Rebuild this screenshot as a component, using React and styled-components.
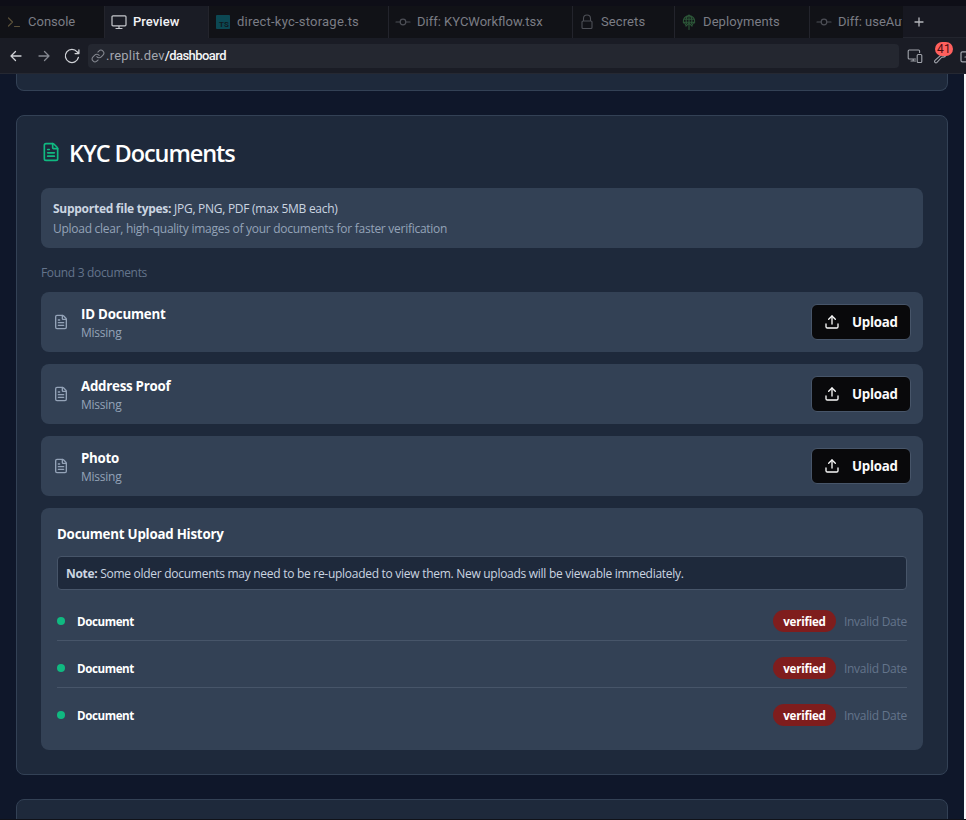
import React from "react";
import styled, { createGlobalStyle, css } from "styled-components";
import { FileText, Upload } from "lucide-react";

const GlobalStyle = createGlobalStyle`
  *, *::before, *::after { box-sizing: border-box; }
  html, body { margin: 0; padding: 0; overflow: hidden; background: #0e101a; }
`;

const uiFont = `Roboto, "Noto Sans", sans-serif`;
const pageFont = `"Open Sans", "Noto Sans", sans-serif`;

const Window = styled.div`
  display: flex;
  flex-direction: column;
  width: 966px;
  height: 820px;
  overflow: hidden;
  background: #0e0e17;
  padding-top: 6px;
`;

/* Tab strip */
const TabStrip = styled.div`
  display: flex;
  flex: none;
  height: 32px;
  background: #111217;
`;

const Tab = styled.div`
  display: flex;
  align-items: center;
  flex: none;
  width: ${(p) => p.$width}px;
  padding-left: ${(p) => p.$inset || 6}px;
  gap: ${(p) => p.$gap || 6}px;
  border-right: 1px solid ${(p) => (p.$last ? "transparent" : "#23242c")};
  background: ${(p) => (p.$active ? "#1a1c25" : "#111217")};
  color: ${(p) => (p.$active ? "#f2f3f5" : "#7b7d85")};
  overflow: hidden;
  svg { flex: none; }
`;

const TabLabel = styled.span`
  font: ${(p) => (p.$active ? 500 : 400)} 13px/20px ${uiFont};
  letter-spacing: ${(p) => p.$track || 0}px;
  white-space: nowrap;
  margin-top: -1px;
`;

const NewTab = styled.div`
  display: flex;
  flex: 1;
  align-items: center;
  padding: 1px 0 0 11px;
  background: #171821;
  border-bottom: 1px solid #23252e;
`;

/* Address bar */
const Toolbar = styled.div`
  display: flex;
  flex: none;
  align-items: center;
  height: 36px;
  padding-left: 8px;
  background: #1a1c25;
  border-bottom: 1px solid #252832;
`;

const NavIcons = styled.div`
  display: flex;
  align-items: center;
  gap: 12px;
  width: 80px;
  svg { flex: none; }
`;

const Address = styled.div`
  display: flex;
  align-items: center;
  width: 811px;
  height: 24px;
  padding-left: 3px;
  border-radius: 4px;
  background: #242730;
  font: 400 13px/20px ${uiFont};
`;

const Host = styled.span`
  margin-left: 1px;
  letter-spacing: 0.22px;
  color: #a3a6ae;
`;

const Path = styled.span`
  letter-spacing: -0.57px;
  font-weight: 500;
  color: #f4f5f6;
`;

const Tools = styled.div`
  display: flex;
  align-items: center;
  flex: 1;
  min-width: 0;
  padding-left: 8px;
  gap: 10px;
  overflow: visible;
  svg { flex: none; }
`;

const DevTools = styled.div`
  position: relative;
  display: flex;
`;

const Badge = styled.span`
  position: absolute;
  left: 2px;
  top: -6px;
  width: 18px;
  height: 14px;
  border-radius: 7px;
  background: #ff605e;
  color: #4c0b10;
  text-align: center;
  font: 400 12px/14px ${uiFont};
  letter-spacing: 0.2px;
`;

/* Previewed page */
const Viewport = styled.div`
  display: flex;
  flex: 1;
  min-height: 0;
  background: #0f172a;
  border-bottom: 1px solid #101219;
  font-family: ${pageFont};
`;

const Page = styled.main`
  width: 964px;
  padding: 0 16px;
  overflow: hidden;
`;

const ScrollEdge = styled.div`
  width: 2px;
  background: #f8f9fa;
`;

const Card = styled.section`
  height: ${(p) => p.$height}px;
  padding: 24px;
  margin-bottom: 24px;
  background: #1e293b;
  border: 1px solid #334155;
  border-radius: 8px;
  ${(p) => p.$cutTop && css`padding: 0; border-top: 0; border-radius: 0 0 8px 8px;`}
`;

const Title = styled.h2`
  display: flex;
  align-items: center;
  gap: 8px;
  height: 32px;
  margin: -4px 0 20px;
  color: #fff;
  font-size: 23.5px;
  font-weight: 600;
  letter-spacing: -1.08px;
  line-height: 32px;
  white-space: nowrap;
  span { padding-top: 2px; }
  svg { color: #10b981; }
`;

const Panel = styled.div`
  background: #334155;
  border-radius: 8px;
`;

const InfoPanel = styled(Panel)`
  height: 60px;
  padding: 11px 12px;
  font-size: 12px;
  line-height: 20px;
  color: #cbd5e1;
`;

const Text = styled.div`
  letter-spacing: ${(p) => p.$track}px;
  white-space: nowrap;
  color: ${(p) => p.$color || "inherit"};
`;

const Strong = styled.strong`
  font-weight: 700;
  letter-spacing: ${(p) => p.$track}px;
`;

const Found = styled(Text)`
  height: 20px;
  margin: 15px 0 9px;
  font-size: 12px;
  line-height: 20px;
`;

const DocRow = styled(Panel)`
  display: flex;
  align-items: center;
  height: 60px;
  margin-bottom: 12px;
  padding: 0 12px;
`;

const DocInfo = styled.div`
  flex: 1;
  margin-left: 12px;
`;

const DocName = styled(Text)`
  font-size: 13.3px;
  font-weight: 700;
  line-height: 20px;
  color: #fff;
`;

const DocStatus = styled(Text)`
  font-size: 12px;
  line-height: 16px;
  margin-top: 1px;
  color: #94a3b8;
`;

const UploadButton = styled.button`
  display: flex;
  align-items: center;
  gap: 12px;
  width: 100px;
  height: 36px;
  padding: 0 12px;
  border: 1px solid #475569;
  border-radius: 6px;
  background: #09090b;
  color: #fafafa;
  font: 700 13.3px/20px ${pageFont};
  letter-spacing: -0.25px;
`;

const History = styled(Panel)`
  height: 242px;
  padding: 16px;
`;

const HistoryTitle = styled.h3`
  margin: 0 0 12px;
  color: #fff;
  font-size: 13.3px;
  font-weight: 700;
  line-height: 20px;
  letter-spacing: -0.22px;
`;

const Note = styled.div`
  height: 34px;
  padding: 0 8px;
  border: 1px solid #475569;
  border-radius: 4px;
  background: #1e293b;
  color: #cbd5e1;
  font-size: 12px;
  line-height: 33px;
  letter-spacing: -0.28px;
  white-space: nowrap;
`;

const Entries = styled.div`
  margin-top: 12px;
`;

const Entry = styled.div`
  display: flex;
  align-items: center;
  height: ${(p) => (p.$last ? 46 : 47)}px;
  margin-top: ${(p) => (p.$first ? -8 : 0)}px;
  padding-top: 8px;
  border-bottom: ${(p) => (p.$last ? 0 : 1)}px solid #475569;
  font-size: 12px;
  line-height: 16px;
`;

const Dot = styled.span`
  width: 8px;
  height: 8px;
  margin: 0 12px 0 0;
  border-radius: 50%;
  background: #10b981;
`;

const EntryName = styled(Text)`
  flex: 1;
  padding-top: 2px;
  font-size: 11.6px;
  font-weight: 700;
  color: #fff;
`;

const EntryDate = styled(Text)`
  padding-top: 2px;
`;

const Pill = styled.span`
  width: 63px;
  height: 22px;
  margin-right: 8px;
  border-radius: 11px;
  background: #7f1d1d;
  color: #fff;
  font-size: 11.6px;
  font-weight: 700;
  letter-spacing: -0.25px;
  line-height: 24px;
  text-align: center;
`;

const Icon = ({ size = 16, width, height, box = "0 0 16 16", color = "currentColor", stroke = 1, children }) => (
  <svg width={width || size} height={height || size} viewBox={box} fill="none" stroke={color} strokeWidth={stroke} strokeLinecap="round" strokeLinejoin="round">
    {children}
  </svg>
);

const ConsoleIcon = () => (
  <Icon color="#5b513a" stroke={1.2} width={14} height={16} box="0 0 14 16">
    <path d="M1.5 4l4 4-4 4M7.5 12.5h5" />
  </Icon>
);
const MonitorIcon = () => (
  <Icon color="#c6c8cd" stroke={1.2}>
    <path d="M2 1.8h12q1 0 1 1v8q0 1-1 1H2q-1 0-1-1v-8q0-1 1-1zM8 12v2.5M5 14.5h6" />
  </Icon>
);
const TsIcon = () => (
  <svg width="14" height="14" viewBox="0 0 14 14">
    <rect width="14" height="14" rx="0.8" fill="#0c4853" />
    <text x="3" y="12.4" fill="#11191e" fontFamily="Roboto, sans-serif" fontWeight="700" fontSize="8">TS</text>
  </svg>
);
const DiffIcon = () => (
  <Icon color="#4d4f56" stroke={1.2}>
    <path d="M1 8h4.2M10.8 8H15" /><circle cx="8" cy="8" r="2.8" />
  </Icon>
);
const LockIcon = () => (
  <Icon color="#4d4f56" stroke={1.1}>
    <path d="M4 7h8q1 0 1 1v5.5q0 1-1 1H4q-1 0-1-1V8q0-1 1-1zM4.5 7V4.5a3.5 3.5 0 0 1 7 0V7" />
  </Icon>
);
const DeployIcon = () => (
  <Icon color="#2c5638" stroke={1.1}>
    <path d="M2.7 9a5.6 5.6 0 1 1 10.6 0M2.6 5.2h10.8M2.3 8.2h11.4M5.6 9.6C4.7 6 5.6 2.4 8 1.1c2.4 1.3 3.3 4.9 2.4 8.5M8 1v14.5M5 12.2l3-3 3 3M3.4 8.6l1.6 3M12.6 8.6l-1.6 3" />
  </Icon>
);
const PlusIcon = () => (
  <Icon size={10} box="0 0 10 10" color="#b5b6bc" stroke={1.3}><path d="M5 1v8M1 5h8" /></Icon>
);
const BackIcon = () => (
  <Icon color="#cfd1d6" stroke={1.3}><path d="M13 8H3M7.5 3.5L3 8l4.5 4.5" /></Icon>
);
const ForwardIcon = () => (
  <Icon color="#858891" stroke={1.3}><path d="M3 8h10M8.5 3.5L13 8l-4.5 4.5" /></Icon>
);
const ReloadIcon = () => (
  <Icon color="#cfd1d6" stroke={1.3}>
    <path d="M14.4 9.4a6.6 6.6 0 1 1-1.3-5.6l1.5 1.7M14.9 1.8v3.8h-3.8" />
  </Icon>
);
const LinkIcon = () => (
  <Icon size={14} box="0 0 24 24" color="#858891" stroke={1.8}>
    <path d="M10 13a5 5 0 0 0 7.54.54l3-3a5 5 0 0 0-7.07-7.07l-1.72 1.71" />
    <path d="M14 11a5 5 0 0 0-7.54-.54l-3 3a5 5 0 0 0 7.07 7.07l1.71-1.71" />
  </Icon>
);
const DevicesIcon = () => (
  <Icon color="#a1a4ac" stroke={1.1}>
    <path d="M8.5 11H2.2q-1 0-1-1V3q0-1 1-1h9.4q1 0 1 1v1.5M6.2 11v2M4 13h4.5" />
    <rect x="10.2" y="6.5" width="4.6" height="8" rx="1" />
  </Icon>
);
const WrenchIcon = () => (
  <Icon color="#a1a4ac" stroke={1.1}>
    <path d="M7.6 7.4L2 12.4q-1 1 0 2t2 0l5-5.4q3 .8 4-2" />
  </Icon>
);
const OpenIcon = () => (
  <Icon color="#a1a4ac" stroke={1.2}>
    <path d="M9 3.8H3.4q-1.4 0-1.4 1.3v7.4q0 1.4 1.4 1.4H9M6 9h3" />
  </Icon>
);

const tabs = [
  { label: "Console", icon: <ConsoleIcon />, width: 105, gap: 7, inset: 7 },
  { label: "Preview", icon: <MonitorIcon />, width: 104, active: true, track: 0.05 },
  { label: "direct-kyc-storage.ts", icon: <TsIcon />, width: 180, gap: 7, inset: 7, track: 0.22 },
  { label: "Diff: KYCWorkflow.tsx", icon: <DiffIcon />, width: 184, track: 0 },
  { label: "Secrets", icon: <LockIcon />, width: 102, track: 0.1 },
  { label: "Deployments", icon: <DeployIcon />, width: 135, track: 0.1 },
  { label: "Diff: useAuth.ts", icon: <DiffIcon />, width: 93, track: 0, last: true },
];

const documents = [
  { name: "ID Document", track: -0.2 },
  { name: "Address Proof", track: -0.25 },
  { name: "Photo", track: -0.3 },
];

export default function App() {
  return (
    <Window>
      <GlobalStyle />
      <TabStrip>
        {tabs.map((t) => (
          <Tab key={t.label} $width={t.width} $gap={t.gap} $inset={t.inset} $active={t.active} $last={t.last}>
            {t.icon}
            <TabLabel $active={t.active} $track={t.track}>{t.label}</TabLabel>
          </Tab>
        ))}
        <NewTab><PlusIcon /></NewTab>
      </TabStrip>
      <Toolbar>
        <NavIcons><BackIcon /><ForwardIcon /><ReloadIcon /></NavIcons>
        <Address>
          <LinkIcon />
          <Host>.replit.dev</Host>
          <Path>/dashboard</Path>
        </Address>
        <Tools>
          <DevicesIcon />
          <DevTools><WrenchIcon /><Badge>41</Badge></DevTools>
          <OpenIcon />
        </Tools>
      </Toolbar>
      <Viewport>
        <Page>
          <Card $height={17} $cutTop />
          <Card $height={660}>
            <Title><FileText size={20} /><span>KYC Documents</span></Title>
            <InfoPanel>
              <Text $track={-0.27}><Strong $track={-0.27}>Supported file types:</Strong> JPG, PNG, PDF (max 5MB each)</Text>
              <Text $track={-0.27} $color="#94a3b8">Upload clear, high-quality images of your documents for faster verification</Text>
            </InfoPanel>
            <Found $track={-0.32} $color="#64748b">Found 3 documents</Found>
            {documents.map((d) => (
              <DocRow key={d.name}>
                <FileText size={16} color="#94a3b8" />
                <DocInfo>
                  <DocName $track={d.track}>{d.name}</DocName>
                  <DocStatus $track={-0.24}>Missing</DocStatus>
                </DocInfo>
                <UploadButton><Upload size={16} />Upload</UploadButton>
              </DocRow>
            ))}
            <History>
              <HistoryTitle>Document Upload History</HistoryTitle>
              <Note><Strong $track={-0.3}>Note:</Strong> Some older documents may need to be re-uploaded to view them. New uploads will be viewable immediately.</Note>
              <Entries>
                {[0, 1, 2].map((i) => (
                  <Entry key={i} $first={i === 0} $last={i === 2}>
                    <Dot />
                    <EntryName $track={-0.42}>Document</EntryName>
                    <Pill>verified</Pill>
                    <EntryDate $track={-0.27} $color="#64748b">Invalid Date</EntryDate>
                  </Entry>
                ))}
              </Entries>
            </History>
          </Card>
          <Card $height={60} />
        </Page>
        <ScrollEdge />
      </Viewport>
    </Window>
  );
}
